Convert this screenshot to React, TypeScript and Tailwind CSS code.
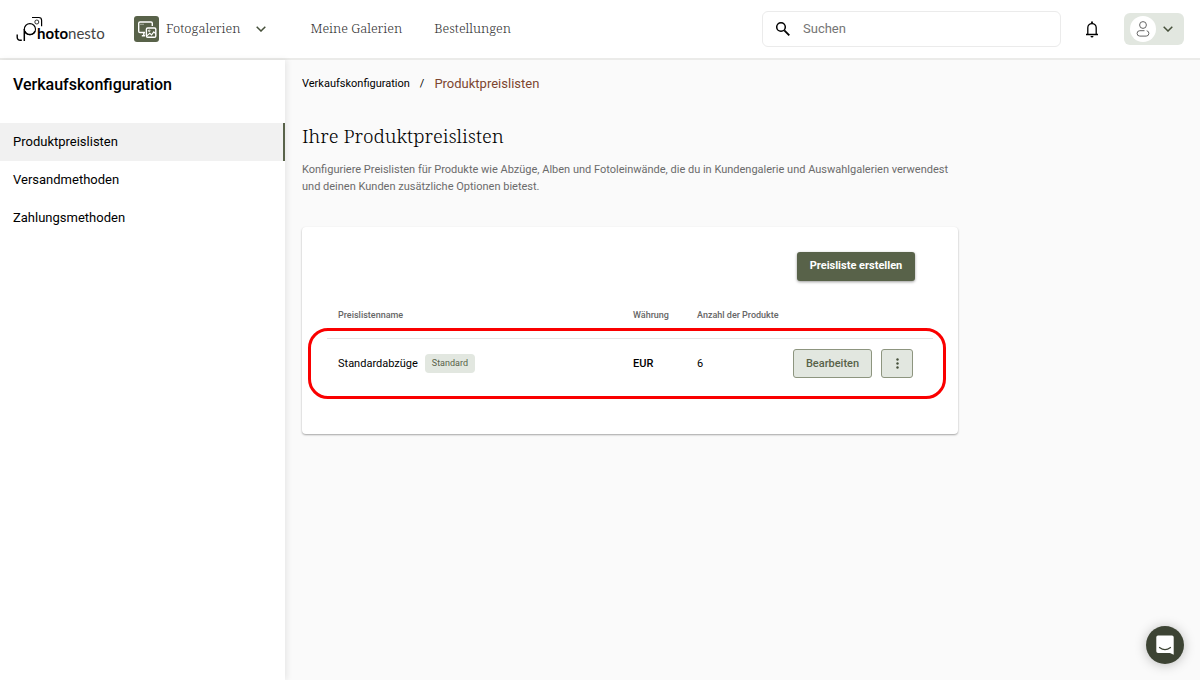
import { useState, ChangeEvent } from "react";

const menuItems = ["Produktpreislisten", "Versandmethoden", "Zahlungsmethoden"];

const priceLists = [
  { id: 1, name: "Standardabzüge", isDefault: true, currency: "EUR", products: 6 },
];

const Logo = () => (
  <a href="#" aria-label="Photonesto" className="flex h-7 w-[88px] items-end text-black">
    <svg width="27" height="27" viewBox="0 0 27 27" fill="none" stroke="currentColor" className="shrink-0">
      <path d="M1.2 18.5v2.8a3 3 0 0 0 3 3h1.6" strokeWidth="1.4" />
      <path d="M8.3 25V13" strokeWidth="1.5" />
      <circle cx="13.9" cy="13.2" r="5.6" strokeWidth="1.1" />
      <path d="M8.9 15.2a5.4 5.4 0 0 0 10 0" strokeWidth="1.5" />
      <path d="M16 1.5h6.8a2.8 2.8 0 0 1 2.8 2.8v6" strokeWidth="1.2" />
      <circle cx="20.8" cy="6" r="2" strokeWidth="0.8" />
    </svg>
    <span className="-ml-1.5 font-[Lato,sans-serif] text-[15px] leading-5">
      <span className="font-bold">hoto</span>
      <span className="text-[#444444]">nesto</span>
    </span>
  </a>
);

const GalleryIcon = () => (
  <svg width="25" height="26" viewBox="0 0 25 26" fill="none" stroke="white">
    <rect width="25" height="26" rx="3" fill="#586249" stroke="none" />
    <path d="M11 16.5H6a1.3 1.3 0 0 1-1.3-1.3V7.3A1.3 1.3 0 0 1 6 6h11a1.3 1.3 0 0 1 1.3 1.3V10" strokeWidth="1.4" />
    <path d="M6.5 8.3h1M8.5 8.3h1" strokeWidth="1" />
    <path d="M9.8 16.5v3M7.8 19.8H11" strokeWidth="1.4" />
    <rect x="12.4" y="12" width="9.4" height="9.2" rx="1.3" fill="#586249" strokeWidth="1.4" />
    <circle cx="15.2" cy="14.8" r="0.8" strokeWidth="0.9" />
    <path d="m12.8 19.8 3-2.5 1.8 1.6 2.2-3 2 2" strokeWidth="1.1" />
  </svg>
);

const Chevron = () => (
  <svg width="10" height="6" viewBox="0 0 10 6" fill="none" stroke="#46503a" strokeWidth="1.5">
    <path d="M.7.7 5 5 9.3.7" />
  </svg>
);

const App = () => {
  const [search, setSearch] = useState("");
  const [active, setActive] = useState(menuItems[0]);

  const handleSearchChange = (e: ChangeEvent<HTMLInputElement>) => {
    setSearch(e.target.value);
  };

  return (
    <div className="flex min-h-screen flex-col bg-[#fafafa] font-[Roboto,sans-serif] text-black">
      <header className="flex h-[60px] items-center border-b-2 border-[#ebebe9] bg-white px-4">
        <Logo />
        <nav className="ml-[30px] flex items-center font-['Noto_Serif','Liberation_Serif',serif] text-[13px] font-light text-[#333333]">
          <button type="button" className="flex items-center">
            <GalleryIcon />
            <span className="ml-[7px]">Fotogalerien</span>
            <span className="ml-4">
              <Chevron />
            </span>
          </button>
          <a href="#" className="ml-11">
            Meine Galerien
          </a>
          <a href="#" className="ml-8">
            Bestellungen
          </a>
        </nav>
        <div className="ml-auto flex items-center">
          <label className="flex h-9 w-[299px] items-center rounded-md border border-[#ebebeb] pl-3">
            <svg width="16" height="16" viewBox="0 0 16 16" fill="none" stroke="black">
              <circle cx="6" cy="6" r="4.3" strokeWidth="1.5" />
              <path d="m9.3 9.3 5 5" strokeWidth="1.9" />
            </svg>
            <input
              type="text"
              aria-label="Suchen"
              placeholder="Suchen"
              className="ml-3 min-w-0 flex-1 text-[13px] placeholder:text-[#757575] focus:outline-none"
              value={search}
              onChange={handleSearchChange}
            />
          </label>
          <button type="button" aria-label="Benachrichtigungen" className="ml-6">
            <svg width="14" height="18" viewBox="0 0 14 18" fill="none" stroke="black" strokeWidth="1.3">
              <path d="M1 14.5h12M2.8 14.5V7.8a4.2 4.2 0 0 1 8.4 0v6.7" />
              <path d="M7 3.5V1.5" strokeWidth="1.8" />
              <path d="M5.5 16h3a1.5 1.5 0 0 1-3 0z" fill="black" stroke="none" />
            </svg>
          </button>
          <button
            type="button"
            aria-label="Konto"
            className="ml-[25px] flex h-8 w-[60px] items-center rounded-md bg-[#e2e7e0] pl-1.5"
          >
            <span className="flex h-[26px] w-[26px] items-center justify-center rounded-full bg-white">
              <svg width="14" height="16" viewBox="0 0 14 16" fill="none" stroke="#666666">
                <circle cx="7" cy="4" r="3.4" />
                <path d="M8.5 9.7H3.8a2.7 2.7 0 0 0 0 5.4h6.4a2.7 2.7 0 0 0 .5-5.35" />
              </svg>
            </span>
            <span className="ml-[7px]">
              <Chevron />
            </span>
          </button>
        </div>
      </header>
      <div className="flex flex-1">
        <aside className="w-[285px] shrink-0 bg-white shadow-[2px_0_6px_rgba(0,0,0,0.08)]">
          <h2 className="px-[13px] pt-[13px] text-base leading-6 font-medium">Verkaufskonfiguration</h2>
          <ul className="mt-[26px]">
            {menuItems.map((item) => (
              <li key={item}>
                <a
                  href="#"
                  onClick={() => setActive(item)}
                  className={
                    item === active
                      ? "flex h-[38px] items-center border-r-2 border-[#586249] bg-[#f1f1f1] px-[13px] text-[13px]"
                      : "flex h-[38px] items-center px-[13px] text-[13px]"
                  }
                >
                  {item}
                </a>
              </li>
            ))}
          </ul>
        </aside>
        <main className="min-w-0 flex-1 px-[17px] pt-3">
          <div className="flex h-6 items-center text-[11px]">
            <a href="#">Verkaufskonfiguration</a>
            <span className="mx-2.5">/</span>
            <span className="text-[13px] text-[#7d4630]">Produktpreislisten</span>
          </div>
          <h1 className="mt-6 font-['Noto_Serif','Liberation_Serif',serif] text-[19px] leading-8 font-light text-black">
            Ihre Produktpreislisten
          </h1>
          <p className="mt-[9px] max-w-[656px] text-[11px] leading-[17px] text-[#6b6b6b]">
            Konfiguriere Preislisten für Produkte wie Abzüge, Alben und Fotoleinwände, die du in
            Kundengalerie und Auswahlgalerien verwendest und deinen Kunden zusätzliche Optionen
            bietest.
          </p>
          <section className="relative mt-8 max-w-[656px] rounded bg-white px-[25px] pt-[25px] pb-[45px] shadow-[0_1px_2px_rgba(0,0,0,0.35)]">
            <div className="flex justify-end pr-[18px]">
              <button
                type="button"
                className="h-[29px] w-[118px] rounded-[3px] bg-[#586249] text-[11px] font-bold text-white shadow-[0_1px_3px_rgba(0,0,0,0.4)]"
              >
                Preisliste erstellen
              </button>
            </div>
            <table className="mt-3 w-full table-fixed text-left text-[11px]">
              <thead>
                <tr className="h-[45px] border-b border-[#e4e4e4] text-[9px] text-[#666666]">
                  <th className="px-[11px] font-medium">Preislistenname</th>
                  <th className="w-16 font-medium">Währung</th>
                  <th className="w-24 font-medium">Anzahl der Produkte</th>
                  <th className="w-[140px]" aria-label="Aktionen" />
                </tr>
              </thead>
              <tbody>
                {priceLists.map((list) => (
                  <tr key={list.id} className="h-[51px]">
                    <td className="px-[11px]">
                      <div className="flex items-center">
                        {list.name}
                        {list.isDefault && (
                          <span className="ml-[7px] rounded bg-[#e2e7e0] px-[7px] text-[9px] leading-[19px] text-[#586249]">
                            Standard
                          </span>
                        )}
                      </div>
                    </td>
                    <td className="font-medium">{list.currency}</td>
                    <td>{list.products}</td>
                    <td>
                      <div className="flex">
                        <button
                          type="button"
                          className="h-[29px] w-[79px] rounded-[3px] border border-[#8d957f] bg-[#e2e7e0] font-medium text-[#586249]"
                        >
                          Bearbeiten
                        </button>
                        <button
                          type="button"
                          aria-label="Mehr"
                          className="ml-[9px] flex h-[29px] w-8 items-center justify-center rounded-[3px] border border-[#8d957f] bg-[#e2e7e0]"
                        >
                          <svg width="3" height="11" viewBox="0 0 3 11" fill="#46503a">
                            <circle cx="1.5" cy="1.5" r="1.2" />
                            <circle cx="1.5" cy="5.5" r="1.2" />
                            <circle cx="1.5" cy="9.5" r="1.2" />
                          </svg>
                        </button>
                      </div>
                    </td>
                  </tr>
                ))}
              </tbody>
            </table>
            <div className="pointer-events-none absolute top-[101px] right-3 left-1.5 h-[71px] rounded-[20px] border-3 border-[#fa0000]" />
          </section>
        </main>
      </div>
      <button
        type="button"
        aria-label="Chat"
        className="fixed right-4 bottom-4 flex h-[38px] w-[38px] items-center justify-center rounded-full bg-[#3d4434] shadow-[0_1px_12px_rgba(0,0,0,0.25)]"
      >
        <svg width="18" height="20" viewBox="0 0 18 20" fill="white">
          <path d="M2 .5h14a1.7 1.7 0 0 1 1.7 1.7v17.6L14 18H2a1.7 1.7 0 0 1-1.7-1.7V2.2A1.7 1.7 0 0 1 2 .5z" />
          <path d="M3.5 12.5c3.3 2.5 7.7 2.5 11 0" fill="none" stroke="#3d4434" strokeWidth="1.2" strokeLinecap="round" />
        </svg>
      </button>
    </div>
  );
};

export default App;
